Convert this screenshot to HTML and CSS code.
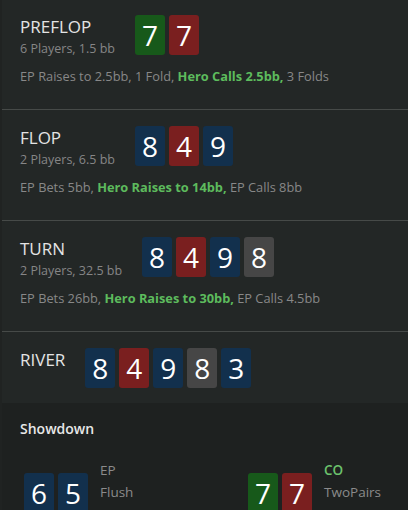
FILE: index.html
```html
<!DOCTYPE html>
<html lang="en">
<head>
<meta charset="UTF-8">
<meta name="viewport" content="width=device-width, initial-scale=1.0">
<title>Hand History</title>
<link rel="stylesheet" href="styles.css">
</head>
<body>
<div class="hand">
    <div class="street">
        <div class="street-head">
            <div class="street-info">
                <div class="street-name">PREFLOP</div>
                <div class="street-meta">6 Players, 1.5 bb</div>
            </div>
            <div class="cards">
                <span class="card green">7</span>
                <span class="card red">7</span>
            </div>
        </div>
        <div class="actions">EP Raises to 2.5bb, 1 Fold, <span class="hero">Hero Calls 2.5bb,</span> 3 Folds</div>
    </div>
    <div class="street">
        <div class="street-head">
            <div class="street-info">
                <div class="street-name">FLOP</div>
                <div class="street-meta">2 Players, 6.5 bb</div>
            </div>
            <div class="cards">
                <span class="card blue">8</span>
                <span class="card red">4</span>
                <span class="card blue">9</span>
            </div>
        </div>
        <div class="actions">EP Bets 5bb, <span class="hero">Hero Raises to 14bb,</span> EP Calls 8bb</div>
    </div>
    <div class="street">
        <div class="street-head">
            <div class="street-info">
                <div class="street-name">TURN</div>
                <div class="street-meta">2 Players, 32.5 bb</div>
            </div>
            <div class="cards">
                <span class="card blue">8</span>
                <span class="card red">4</span>
                <span class="card blue">9</span>
                <span class="card grey">8</span>
            </div>
        </div>
        <div class="actions">EP Bets 26bb, <span class="hero">Hero Raises to 30bb,</span> EP Calls 4.5bb</div>
    </div>
    <div class="street last">
        <div class="street-head">
            <div class="street-info">
                <div class="street-name">RIVER</div>
            </div>
            <div class="cards">
                <span class="card blue">8</span>
                <span class="card red">4</span>
                <span class="card blue">9</span>
                <span class="card grey">8</span>
                <span class="card blue">3</span>
            </div>
        </div>
    </div>
    <div class="showdown">
        <div class="showdown-title">Showdown</div>
        <div class="players">
            <div class="player">
                <div class="cards">
                    <span class="card blue">6</span>
                    <span class="card blue">5</span>
                </div>
                <div class="player-info">
                    <div class="player-pos">EP</div>
                    <div class="player-hand">Flush</div>
                </div>
            </div>
            <div class="player">
                <div class="cards">
                    <span class="card green">7</span>
                    <span class="card red">7</span>
                </div>
                <div class="player-info">
                    <div class="player-pos winner">CO</div>
                    <div class="player-hand">TwoPairs</div>
                </div>
            </div>
        </div>
    </div>
</div>
</body>
</html>
```

FILE: styles.css
```css
body {
    margin: 0;
    padding: 0;
    background-color: #1f2221;
    font-family: "Open Sans", "Noto Sans", sans-serif;
    color: #8b8b8b;
}
.hand {
    width: 408px;
    height: 510px;
    overflow: hidden;
    background-color: #232726;
    border-left: 2px solid #202322;
    box-sizing: border-box;
}
.street {
    padding: 16px 20px 24px 18px;
    border-top: 1px solid #464a48;
}
.street:first-child {
    padding-top: 15px;
    border-top: 0;
}
.street.last {
    padding-bottom: 15px;
}
.street-head {
    display: flex;
    align-items: flex-start;
    gap: 20px;
    height: 40px;
}
.street-name {
    font-size: 17px;
    line-height: 24px;
    color: #e4e4e4;
}
.street-meta {
    font-size: 12.5px;
    line-height: 20px;
    color: #868686;
}
.actions {
    margin-top: 12px;
    font-size: 12.8px;
    line-height: 18px;
    color: #888888;
}
.hero {
    color: #5dbb5d;
    font-weight: 700;
}
.cards {
    display: flex;
    gap: 4px;
}
.card {
    width: 30px;
    height: 40px;
    border-radius: 3px;
    display: flex;
    align-items: center;
    justify-content: center;
    font-size: 28px;
    line-height: 1;
    color: #ffffff;
}
.green {
    background-color: #17591a;
}
.red {
    background-color: #7a1f1f;
}
.blue {
    background-color: #12304d;
}
.grey {
    background-color: #464646;
}
.showdown {
    background-color: #1e2120;
    padding: 16px 20px 0 18px;
}
.showdown-title {
    font-size: 14px;
    line-height: 20px;
    font-weight: 600;
    color: #e8e8e8;
}
.players {
    display: flex;
    justify-content: space-between;
    margin-top: 20px;
    padding-left: 4px;
}
.player {
    display: flex;
    gap: 12px;
    width: 140px;
}
.player .cards {
    margin-top: 14px;
}
.player-info {
    font-size: 13.5px;
    line-height: 22px;
}
.player-pos.winner {
    color: #6cc26c;
    font-weight: 600;
}
```
